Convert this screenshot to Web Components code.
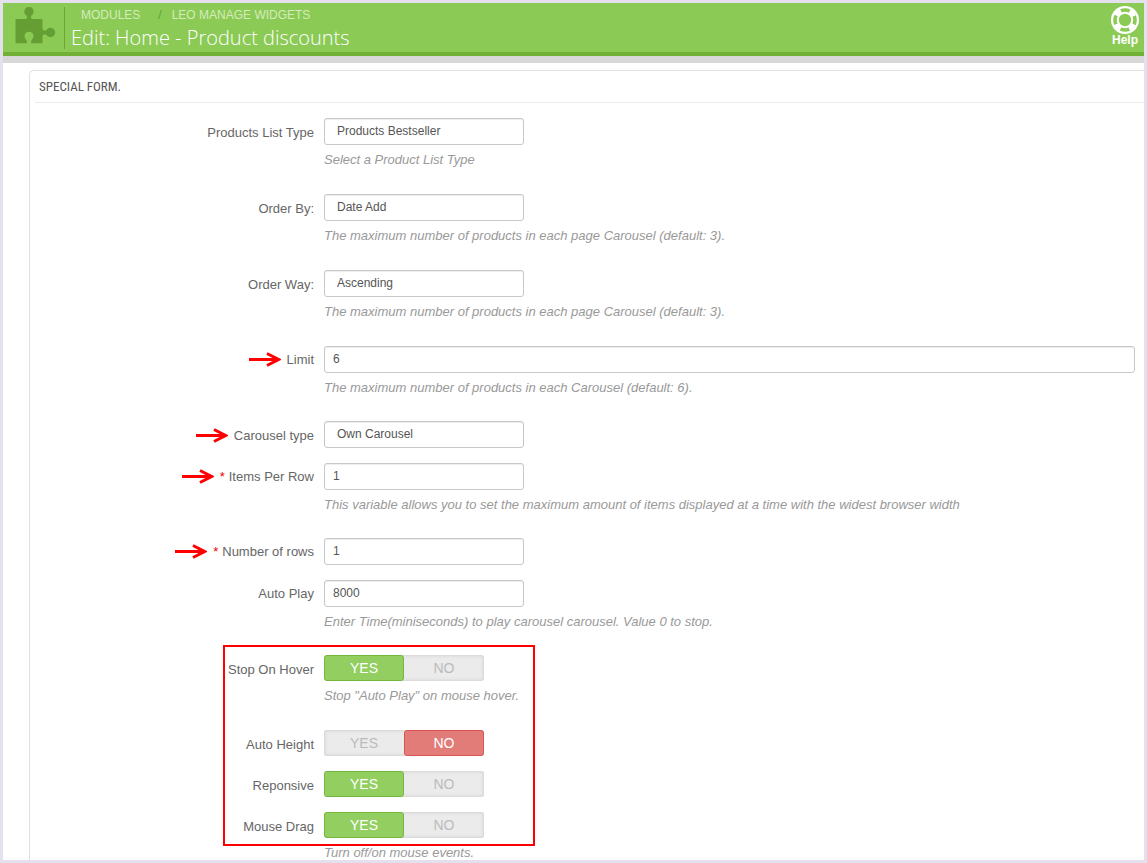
<!DOCTYPE html>
<html lang="en">
<head>
<meta charset="utf-8">
<meta name="viewport" content="width=device-width, initial-scale=1">
<title>Edit: Home - Product discounts</title>
<style>
  body { margin: 0; font: 13px/18px "Liberation Sans", Arial, sans-serif; color: #666; background: #fff; }
</style>
</head>
<body>
<admin-page></admin-page>
<script>
const define = (name, html, setup) => {
  const template = document.createElement('template');
  template.innerHTML = html;
  customElements.define(name, class extends HTMLElement {
    constructor() {
      super();
      this.attachShadow({ mode: 'open' }).append(template.content.cloneNode(true));
    }
    connectedCallback() {
      if (setup && !this.ready) { this.ready = true; setup(this, this.shadowRoot); }
    }
  });
};

define('page-header', `
<style>
  :host { display: flex; align-items: flex-start; height: 49px; background: #8cca56; border-bottom: 4px solid #72b036; box-shadow: 0 7px 0 #d8d8d8; margin-bottom: 7px; color: #fff; flex: none; }
  .module { width: 61px; height: 42px; margin-top: 4px; border-right: 1px solid #6aa536; fill: #659f34; }
  .module svg { display: block; margin-left: 12px; }
  .titles { flex: 1; padding-left: 6px; }
  ol { display: flex; list-style: none; margin: 4px 0 0 10px; padding: 0; font-size: 12px; line-height: 16px; }
  li + li::before { content: "/"; color: #659f34; margin: 0 10px 0 18px; }
  a { color: #d3ecbb; text-decoration: none; }
  h1 { margin: 1px 0 0; font: 300 20px/28px "Open Sans", sans-serif; }
  .help { display: flex; flex-direction: column; align-items: center; width: 38px; margin-top: 3px; color: #fff; font-weight: bold; font-size: 12px; line-height: 14px; }
  .help svg { display: block; margin-bottom: -1px; }
</style>
<div class="module">
  <svg width="42" height="38" viewBox="0 0 42 38" aria-hidden="true"><path d="M0.500 12H9.500C12 12 12.600 10.500 11.500 8.500A4.700 4.700 0 1 1 16.500 8.500C15.400 10.500 16 12 18.500 12H27.500V21C27.500 23.500 29 24 31.500 22.900A4.700 4.700 0 1 1 31.500 28C29 27 27.500 27.500 27.500 30V36.300H17.500C15.600 36.300 15.400 34.500 16.800 32.700A4.500 4.500 0 1 0 11.200 32.700C12.600 34.500 12.400 36.300 10.500 36.300H0.500Z"/></svg>
</div>
<div class="titles">
  <nav aria-label="Breadcrumb"><ol><li><a href="#">MODULES</a></li><li><a href="#">LEO MANAGE WIDGETS</a></li></ol></nav>
  <h1>Edit: Home - Product discounts</h1>
</div>
<a class="help" href="#">
  <svg width="28" height="28" viewBox="0 0 28 28" aria-hidden="true"><circle cx="14" cy="14" r="14" fill="#fff"/><circle cx="14" cy="14" r="10" fill="none" stroke="#8cca56" stroke-width="3.600" stroke-dasharray="9 6.708" stroke-dashoffset="4.500"/><circle cx="14" cy="14" r="6.200" fill="#8cca56"/></svg>
  Help
</a>`);

define('form-panel', `
<style>
  :host { display: block; margin: 7px 0 0 26px; padding: 0 0 0 5px; border: 1px solid #e1e1e1; border-right: 0; border-bottom: 0; border-radius: 5px 0 0 0; }
  h2 { margin: 0 0 15px; padding: 7px 0 6px 4px; border-bottom: 1px solid #ebebeb; color: #555; font: 13px/18px "Ubuntu Condensed", "Roboto Condensed", "Liberation Sans Narrow", "Open Sans", sans-serif; text-transform: uppercase; }
  form { padding-right: 9px; }
</style>
<h2><slot name="title"></slot></h2>
<form><slot></slot></form>`);

/* One row: label, control and an optional hint below it. */
define('form-row', `
<style>
  :host { display: grid; grid-template-columns: 279px minmax(0, 1fr); column-gap: 10px; margin-bottom: 15px; --hint-end: 9px; --label-top: 5px; }
  :host([type="select"]), :host([type="switch"]) { --hint-end: 10px; --label-top: 6px; }
  .name { display: flex; justify-content: flex-end; padding-top: var(--label-top); align-items: flex-start; }
  .arrow { margin-right: 6px; flex: none; }
  .star { color: #e00; margin-right: 4px; }
  input[type="text"], select { display: block; box-sizing: border-box; width: 200px; max-width: 100%; height: 27px; margin: 0; padding: 0 8px 2px; border: 1px solid #c7c7c7; border-radius: 3px; background: #fff; box-shadow: inset 0 1px 1px #eee; color: #555; font: 12px "Liberation Sans", Arial, sans-serif; appearance: none; }
  select { padding-left: 12px; }
  :host([wide]) input[type="text"] { width: 100%; }
  fieldset { display: flex; width: 160px; height: 26px; margin: 0; padding: 0; border: 0; border-radius: 3px; background: #ebebeb; box-shadow: inset 0 0 3px 1px #d3d3d3; }
  .choice { flex: 1; position: relative; }
  .choice input { position: absolute; inset: 0; width: 100%; height: 100%; margin: 0; opacity: 0; }
  .choice label { display: block; box-sizing: border-box; height: 26px; border: 1px solid transparent; border-radius: 3px; text-align: center; line-height: 24px; font-size: 14px; color: #bbb; }
  .yes input:checked + label { background: #92cf60; border-color: #74b93d; color: #fff; }
  .no input:checked + label { background: #e27c79; border-color: #d9534f; color: #fff; }
  .hint { margin: 0; padding: 6px 0 var(--hint-end); font-style: italic; color: #999; }
</style>
<div class="name"></div>
<div class="field"></div>`, (host, root) => {
  const text = host.getAttribute('label');
  const value = host.getAttribute('value');
  const type = host.getAttribute('type');
  const name = root.querySelector('.name');
  const field = root.querySelector('.field');
  const arrow = host.hasAttribute('marked')
    ? '<svg class="arrow" width="32" height="16" viewBox="0 0 32 16" aria-hidden="true"><path d="M0 8.500H28M18 2.500L29.500 8.500L18 14.500" fill="none" stroke="#f00" stroke-width="3"/></svg>' : '';
  const star = host.hasAttribute('required') ? '<span class="star">*</span>' : '';
  name.innerHTML = arrow + star + (type === 'switch'
    ? `<span id="name">${text}</span>` : `<label for="control">${text}</label>`);
  if (type === 'select') {
    field.innerHTML = `<select id="control"><option>${value}</option></select>`;
  } else if (type === 'switch') {
    const choice = v => `<div class="choice ${v}"><input type="radio" name="state" id="${v}"${v === value ? ' checked' : ''}><label for="${v}">${v.toUpperCase()}</label></div>`;
    field.innerHTML = `<fieldset aria-labelledby="name">${choice('yes')}${choice('no')}</fieldset>`;
  } else {
    field.innerHTML = `<input type="text" id="control" value="${value}">`;
  }
  if (host.hasAttribute('hint')) {
    const hint = document.createElement('p');
    hint.className = 'hint';
    hint.textContent = host.getAttribute('hint');
    field.append(hint);
  }
});

/* Red frame laid over the switches it calls out. */
define('callout-group', `
<style>
  :host { display: block; position: relative; }
  .frame { position: absolute; box-sizing: border-box; left: 188px; top: -10px; width: 312px; height: 201px; border: 2px solid #f00; pointer-events: none; }
</style>
<slot></slot><div class="frame"></div>`);

define('admin-page', `
<style>
  :host { display: flex; flex-direction: column; box-sizing: border-box; height: 100vh; border: 3px solid #e4e0ee; background: #fff; }
  main { flex: 1; min-height: 0; overflow: auto; scrollbar-width: none; }
</style>
<page-header></page-header>
<main>
  <form-panel>
    <span slot="title">Special Form.</span>
    <form-row type="select" label="Products List Type" value="Products Bestseller" hint="Select a Product List Type"></form-row>
    <form-row type="select" label="Order By:" value="Date Add" hint="The maximum number of products in each page Carousel (default: 3)."></form-row>
    <form-row type="select" label="Order Way:" value="Ascending" hint="The maximum number of products in each page Carousel (default: 3)."></form-row>
    <form-row type="text" wide marked label="Limit" value="6" hint="The maximum number of products in each Carousel (default: 6)."></form-row>
    <form-row type="select" marked label="Carousel type" value="Own Carousel"></form-row>
    <form-row type="text" marked required label="Items Per Row" value="1" hint="This variable allows you to set the maximum amount of items displayed at a time with the widest browser width"></form-row>
    <form-row type="text" marked required label="Number of rows" value="1"></form-row>
    <form-row type="text" label="Auto Play" value="8000" hint="Enter Time(miniseconds) to play carousel carousel. Value 0 to stop."></form-row>
    <callout-group>
      <form-row type="switch" label="Stop On Hover" value="yes" hint='Stop "Auto Play" on mouse hover.'></form-row>
      <form-row type="switch" label="Auto Height" value="no"></form-row>
      <form-row type="switch" label="Reponsive" value="yes"></form-row>
      <form-row type="switch" label="Mouse Drag" value="yes" hint="Turn off/on mouse events."></form-row>
    </callout-group>
  </form-panel>
</main>`);
</script>
</body>
</html>
